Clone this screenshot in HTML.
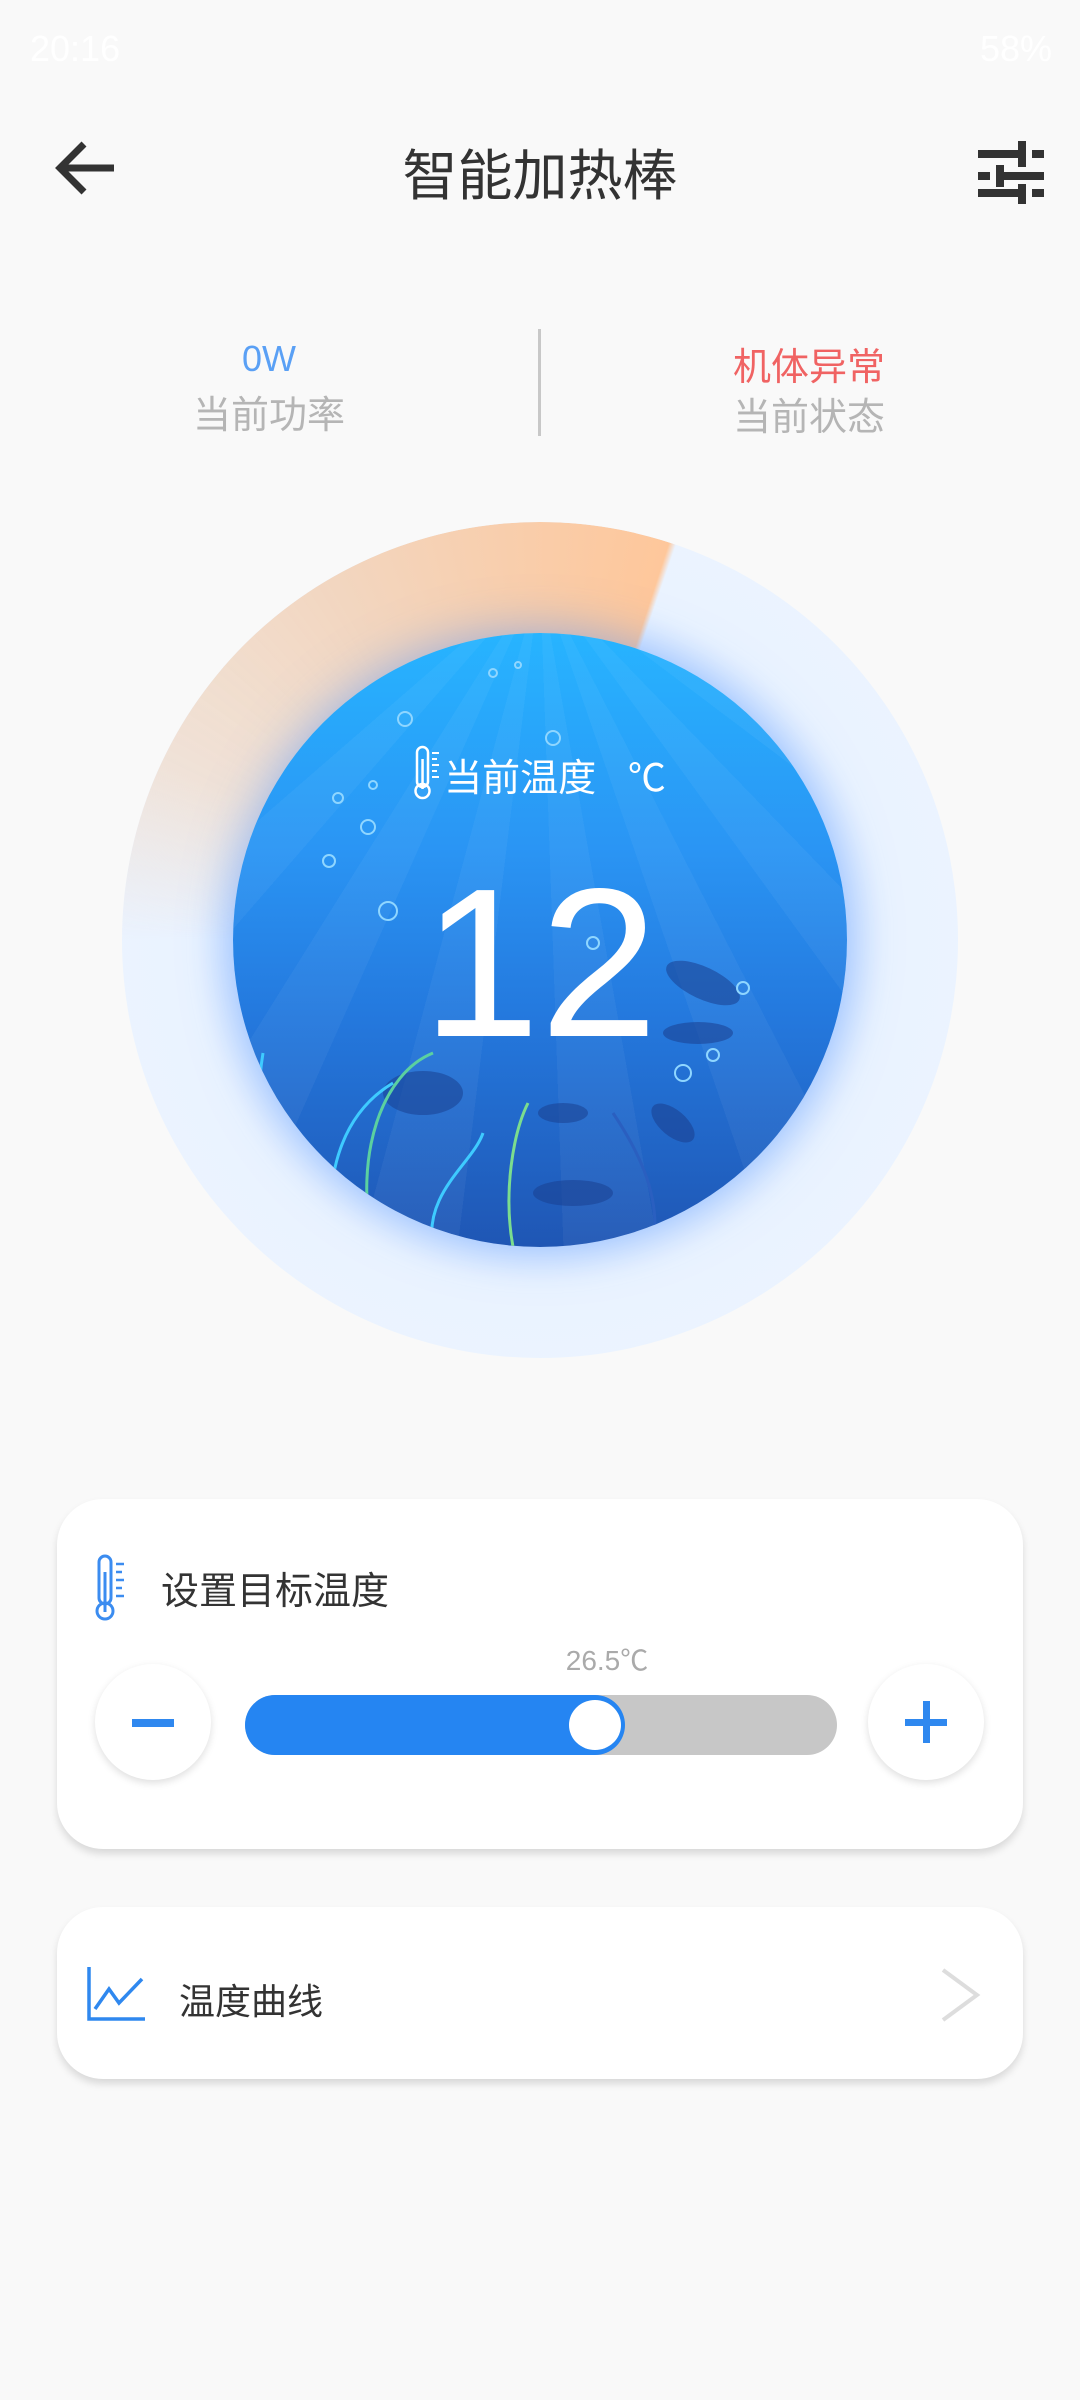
<!DOCTYPE html>
<html><head><meta charset="utf-8"><style>
*{margin:0;padding:0;box-sizing:border-box}
body{width:1080px;height:2400px;background:#f9f9f9;position:relative;overflow:hidden;font-family:"Liberation Sans","Noto Sans CJK SC",sans-serif}
.abs{position:absolute}
.card{position:absolute;left:57px;width:966px;background:#fff;border-radius:46px;box-shadow:0 5px 8px rgba(0,0,0,.13)}
.btn{position:absolute;width:116px;height:116px;border-radius:50%;background:#fff;box-shadow:0 3px 8px rgba(0,0,0,.13)}
</style></head><body>
<div class="abs" style="left:30px;top:28px;color:#fff;font-size:36px">20:16</div>
<div class="abs" style="right:28px;top:28px;color:#fff;font-size:36px">58%</div>

<svg class="abs" style="left:52px;top:140px" width="66" height="56" viewBox="0 0 66 56"><path d="M62 28H10M32 4L8 28l24 24" stroke="#333" stroke-width="7" fill="none"/></svg>
<div class="abs" style="left:0;width:1080px;top:131px;text-align:center;font-size:55px;color:#333">智能加热棒</div>
<svg class="abs" style="left:978px;top:138px" width="66" height="66" viewBox="0 0 66 66"><g fill="#333"><rect x="0" y="12" width="40" height="8"/><rect x="40" y="3" width="8" height="26"/><rect x="54" y="12" width="12" height="8"/><rect x="0" y="34" width="12" height="8"/><rect x="18" y="27" width="8" height="22"/><rect x="26" y="34" width="40" height="8"/><rect x="0" y="51" width="40" height="8"/><rect x="40" y="46" width="8" height="20"/><rect x="54" y="51" width="12" height="8"/></g></svg>

<div class="abs" style="left:139px;width:260px;top:338px;text-align:center;font-size:36px;color:#5aa0f5">0W</div>
<div class="abs" style="left:119px;width:300px;top:384px;text-align:center;font-size:38px;color:#b5b5b5">当前功率</div>
<div class="abs" style="left:538px;top:329px;width:3px;height:107px;background:#c8c8c8"></div>
<div class="abs" style="left:659px;width:300px;top:336px;text-align:center;font-size:38px;color:#f06363">机体异常</div>
<div class="abs" style="left:659px;width:300px;top:386px;text-align:center;font-size:38px;color:#b5b5b5">当前状态</div>

<!-- dial -->
<div class="abs" style="left:122px;top:522px;width:836px;height:836px;border-radius:50%;background:radial-gradient(circle,#8fbdff 36%,#cfe2ff 45%,#eaf3ff 58%,#edf4ff 100%)"></div>
<div class="abs" style="left:122px;top:522px;width:836px;height:836px;border-radius:50%;background:conic-gradient(from 270deg,rgba(240,228,220,0) 0deg,rgba(240,224,212,.9) 25deg,#f2d6c0 60deg,#fec79b 108deg,rgba(0,0,0,0) 109deg);-webkit-mask:radial-gradient(circle,transparent 300px,#000 302px);mask:radial-gradient(circle,transparent 300px,#000 302px)"></div>
<div class="abs" style="left:233px;top:633px;width:614px;height:614px;border-radius:50%;overflow:hidden;background:linear-gradient(180deg,#27b4ff 0%,#2a95f4 35%,#2479de 62%,#1f56b4 100%);box-shadow:0 0 50px rgba(70,140,255,.55)">
 <div class="abs" style="left:-300px;top:-300px;width:1214px;height:1214px;background:repeating-conic-gradient(from 0deg at 50% 20%,rgba(255,255,255,.045) 0deg 8deg,rgba(255,255,255,0) 8deg 17deg)"></div>
 <svg class="abs" style="left:0;top:0" width="614" height="614" viewBox="0 0 614 614">
  <g fill="#1a3f8f" opacity=".55"><ellipse cx="470" cy="350" rx="40" ry="16" transform="rotate(25 470 350)"/><ellipse cx="465" cy="400" rx="35" ry="11"/><ellipse cx="190" cy="460" rx="40" ry="22"/><ellipse cx="330" cy="480" rx="25" ry="10"/><ellipse cx="440" cy="490" rx="26" ry="13" transform="rotate(40 440 490)"/><ellipse cx="340" cy="560" rx="40" ry="13"/></g>
  <g fill="none" stroke-width="3"><path d="M140 614 C120 520 150 440 200 420" stroke="#5bd0a0"/><path d="M100 614 C90 540 110 480 160 450" stroke="#3ecbff"/><path d="M60 600 C30 540 20 480 30 420" stroke="#3ecbff"/><path d="M280 614 C270 560 280 500 295 470" stroke="#7bdd8e"/><path d="M200 614 C190 560 240 530 250 500" stroke="#3ecbff"/><path d="M420 614 C430 560 400 510 380 480" stroke="#2a5fc0"/></g>
  <g fill="none" stroke="#8fd6ff" stroke-width="2"><circle cx="105" cy="165" r="5"/><circle cx="135" cy="194" r="7"/><circle cx="96" cy="228" r="6"/><circle cx="155" cy="278" r="9"/><circle cx="140" cy="152" r="4"/><circle cx="260" cy="40" r="4"/><circle cx="285" cy="32" r="3"/><circle cx="172" cy="86" r="7"/><circle cx="320" cy="105" r="7"/><circle cx="360" cy="310" r="6"/><circle cx="510" cy="355" r="6"/><circle cx="480" cy="422" r="6"/><circle cx="450" cy="440" r="8"/></g>
  <ellipse cx="52" cy="45" rx="22" ry="8" fill="#7cc9ff" opacity=".7"/>
 </svg>
 <div class="abs" style="left:0;width:614px;top:112px;text-align:center;font-size:38px;color:#fff">
  <svg width="30" height="56" viewBox="0 0 30 56" style="vertical-align:-10px"><rect x="3" y="2" width="11" height="40" rx="5.5" fill="none" stroke="#fff" stroke-width="2.5"/><circle cx="8.5" cy="46" r="7" fill="none" stroke="#fff" stroke-width="2.5"/><rect x="7.3" y="14" width="2.5" height="30" fill="#fff"/><path d="M18 8h7M18 14h5M18 20h7M18 26h5M18 32h7" stroke="#fff" stroke-width="2"/></svg>当前温度&nbsp;&nbsp;&nbsp;℃</div>
 <div class="abs" style="left:0;width:614px;top:224px;text-align:center;font-size:212px;line-height:212px;color:#fff">12</div>
</div>

<!-- card1 -->
<div class="card" style="top:1499px;height:350px">
 <svg class="abs" style="left:37px;top:55px" width="36" height="68" viewBox="0 0 36 68"><rect x="5" y="2" width="12" height="48" rx="6" fill="none" stroke="#3b8cf0" stroke-width="3"/><circle cx="11" cy="57" r="8" fill="none" stroke="#3b8cf0" stroke-width="3"/><rect x="9.5" y="18" width="3" height="40" fill="#3b8cf0"/><path d="M22 10h8M22 18h6M22 26h8M22 34h6M22 42h8" stroke="#3b8cf0" stroke-width="2.5"/></svg>
 <div class="abs" style="left:104px;top:61px;font-size:38px;color:#333">设置目标温度</div>
 <div class="abs" style="left:450px;width:200px;top:140px;text-align:center;font-size:28px;color:#aaa">26.5℃</div>
 <div class="btn" style="left:38px;top:165px"><div class="abs" style="left:37px;top:55px;width:42px;height:8px;background:#2f88ef"></div></div>
 <div class="abs" style="left:188px;top:196px;width:592px;height:60px;border-radius:30px;background:#c7c7c7"></div>
 <div class="abs" style="left:188px;top:196px;width:380px;height:60px;border-radius:30px;background:#2585f2"></div>
 <div class="abs" style="left:512px;top:201px;width:52px;height:50px;border-radius:50%;background:#fff"></div>
 <div class="btn" style="left:811px;top:165px"><div class="abs" style="left:37px;top:55px;width:42px;height:7px;background:#2f88ef"></div><div class="abs" style="left:55px;top:37px;width:7px;height:42px;background:#2f88ef"></div></div>
</div>

<!-- card2 -->
<div class="card" style="top:1907px;height:172px">
 <svg class="abs" style="left:30px;top:60px" width="60" height="54" viewBox="0 0 60 54"><path d="M2 0V52H58" stroke="#2f88ef" stroke-width="3.5" fill="none"/><path d="M8 42L22 22L32 36L55 12" stroke="#2f88ef" stroke-width="3.5" fill="none"/></svg>
 <div class="abs" style="left:122px;top:66px;font-size:36px;color:#333">温度曲线</div>
 <svg class="abs" style="left:882px;top:60px" width="44" height="56" viewBox="0 0 44 56"><path d="M4 3L38 28L4 53" stroke="#ddd" stroke-width="4" fill="none"/></svg>
</div>
</body></html>
